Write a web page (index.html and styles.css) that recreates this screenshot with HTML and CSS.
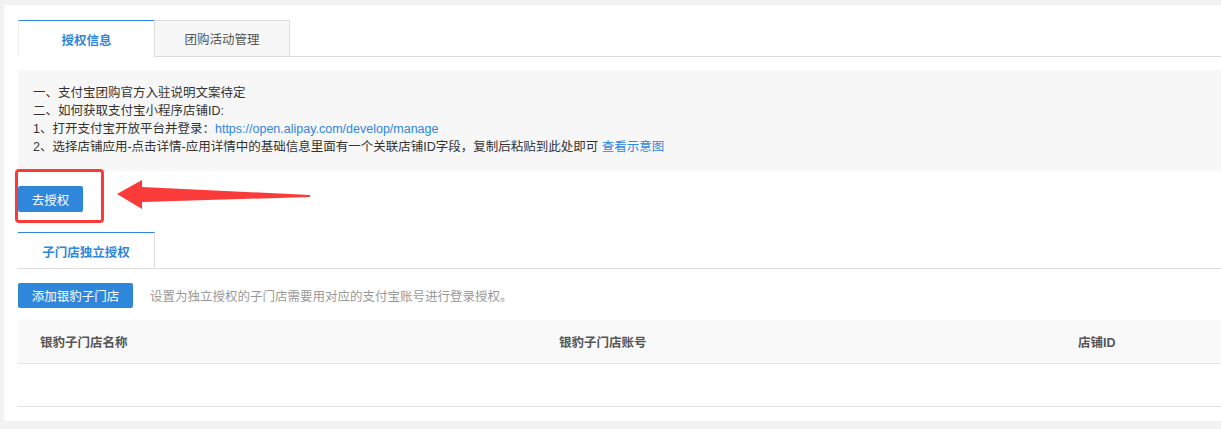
FILE: index.html
```html
<!DOCTYPE html>
<html lang="zh-CN">
<head>
<meta charset="utf-8">
<link rel="stylesheet" href="styles.css">
</head>
<body>
<div class="panel">
  <div class="tabs">
    <div class="tab active">授权信息</div>
    <div class="tab">团购活动管理</div>
  </div>
  <div class="info">
    <p>一、支付宝团购官方入驻说明文案待定</p>
    <p>二、如何获取支付宝小程序店铺ID:</p>
    <p>1、打开支付宝开放平台并登录：<a class="link">https://open.alipay.com/develop/manage</a></p>
    <p>2、选择店铺应用-点击详情-应用详情中的基础信息里面有一个关联店铺ID字段，复制后粘贴到此处即可 <a class="link">查看示意图</a></p>
  </div>
  <div class="auth-row">
    <button class="btn btn-auth">去授权</button>
    <div class="highlight"></div>
    <svg class="arrow" width="200" height="34" viewBox="0 0 200 34">
      <polygon points="0,14 25,0 25,7 193,15 193,17 25,22 25,29" fill="#fb3a3a"/>
    </svg>
  </div>
  <div class="subtabs">
    <div class="subtab">子门店独立授权</div>
  </div>
  <div class="toolbar">
    <button class="btn btn-add">添加银豹子门店</button>
    <span class="hint">设置为独立授权的子门店需要用对应的支付宝账号进行登录授权。</span>
  </div>
  <div class="table">
    <div class="thead">
      <div class="th">银豹子门店名称</div>
      <div class="th">银豹子门店账号</div>
      <div class="th">店铺ID</div>
    </div>
    <div class="tbody"></div>
  </div>
</div>
</body>
</html>
```
FILE: styles.css
```css
* { box-sizing: border-box; }
html, body { margin: 0; }
body {
  background: #f2f2f2;
  padding: 5px 0 8px 4px;
  font-family: "Liberation Sans", "Noto Sans CJK SC", sans-serif;
  font-size: 12.5px;
  color: #333;
  overflow: hidden;
}
.panel {
  background: #fff;
  padding: 15px 0 14px 14px;
  height: 416px;
}
.tabs {
  display: flex;
  height: 37px;
  border-bottom: 1px solid #ddd;
}
.tab {
  width: 136px;
  height: 37px;
  display: flex;
  align-items: center;
  justify-content: center;
  font-size: 12.5px;
  color: #555;
  background: #f7f7f7;
  border: 1px solid #ddd;
}
.tab.active {
  background: #fff;
  color: #2f86dd;
  font-weight: bold;
  border: none;
  border-top: 1px solid #2f86dd;
  border-left: 1px solid #eee;
}
.info {
  margin-top: 13px;
  background: #f7f7f7;
  padding: 14px 15px 15px;
  height: 101px;
}
.info p {
  margin: 0;
  line-height: 18px;
  color: #333;
}
.link { color: #2f86dd; }
.auth-row {
  position: relative;
  padding-top: 15px;
  height: 61px;
}
.btn {
  border: none;
  background: #2f87dc;
  color: #fff;
  font-family: inherit;
  font-size: 12.5px;
  border-radius: 2px;
  padding: 0;
  display: block;
}
.btn-auth {
  width: 65px;
  height: 26px;
}
.highlight {
  position: absolute;
  left: -3px;
  top: -2px;
  width: 89px;
  height: 54px;
  border: 3px solid #fb3a3a;
  border-radius: 4px;
}
.arrow {
  position: absolute;
  left: 99px;
  top: 9px;
}
.subtabs {
  height: 37px;
  border-bottom: 1px solid #ddd;
  display: flex;
}
.subtab {
  width: 137px;
  height: 37px;
  border-top: 1px solid #2f86dd;
  border-right: 1px solid #ddd;
  display: flex;
  align-items: center;
  justify-content: center;
  font-size: 12.5px;
  font-weight: bold;
  color: #2f86dd;
}
.toolbar {
  display: flex;
  align-items: center;
  gap: 17px;
  margin-top: 14px;
}
.btn-add {
  width: 115px;
  height: 25px;
}
.hint {
  color: #999;
  font-size: 12.5px;
}
.table {
  margin-top: 12px;
}
.thead {
  display: grid;
  grid-template-columns: 519px 519px 1fr;
  background: #f9f9f9;
  height: 44px;
  border-bottom: 1px solid #e5e5e5;
  align-items: center;
}
.th {
  padding-left: 22px;
  font-size: 12.5px;
  font-weight: bold;
  color: #555;
}
.tbody {
  height: 43px;
  border-bottom: 1px solid #e5e5e5;
}
```
